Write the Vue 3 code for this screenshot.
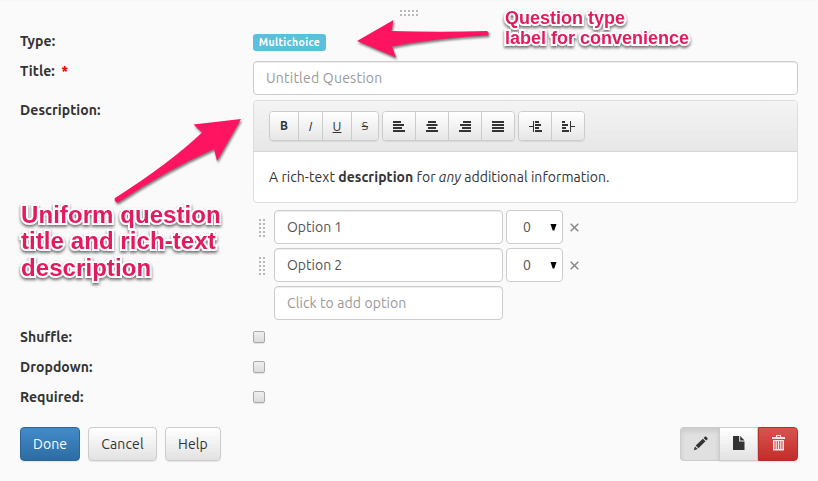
<script setup>
import { ref } from 'vue'

const title = ref('')
const options = ref([
  { id: 1, text: 'Option 1', score: 0 },
  { id: 2, text: 'Option 2', score: 0 },
])
const flags = ['Shuffle:', 'Dropdown:', 'Required:']
const aligns = [
  { name: 'left', d: 'M0 0h8v2H0zM0 3h11v2H0zM0 6h9v2H0zM0 9h12v2H0z' },
  { name: 'center', d: 'M2 0h8v2H2zM0.5 3h11v2H.5zM2 6h8v2H2zM0 9h12v2H0z' },
  { name: 'right', d: 'M4 0h8v2H4zM1 3h11v2H1zM3 6h9v2H3zM0 9h12v2H0z' },
  { name: 'justify', d: 'M0 0h12v2H0zM0 3h12v2H0zM0 6h12v2H0zM0 9h12v2H0z' },
]
const indents = [
  { name: 'indent', d: 'M0 5h4v1H0zM4 0h1v11H4zM6 0h4v2H6zM6 3h6v2H6zM6 6h4v2H6zM6 9h7v2H6z' },
  { name: 'outdent', d: 'M9 5h4v1H9zM8 0h1v11H8zM0 0h3v2H0zM0 3h6v2H0zM0 6h4v2H0zM0 9h7v2H0z' },
]
</script>

<template>
  <div class="panel">
    <div class="drag-row"><i class="dots wide"></i></div>

    <div class="row type">
      <span class="label">Type:</span>
      <span class="badge">Multichoice</span>
    </div>

    <div class="row title">
      <span class="label">Title: <b class="star">*</b></span>
      <input v-model="title" class="field main" placeholder="Untitled Question" />
    </div>

    <div class="row desc">
      <span class="label">Description:</span>
      <div class="editor">
        <div class="toolbar">
          <div class="group">
            <button class="tool w29 bold">B</button>
            <button class="tool w24 italic">I</button>
            <button class="tool w29 under">U</button>
            <button class="tool w26 strike">S</button>
          </div>
          <div class="group">
            <button v-for="a in aligns" :key="a.name" class="tool icon">
              <svg width="12" height="11" viewBox="0 0 12 11"><path :d="a.d" /></svg>
            </button>
          </div>
          <div class="group">
            <button v-for="a in indents" :key="a.name" class="tool icon">
              <svg width="13" height="11" viewBox="0 0 13 11"><path :d="a.d" /></svg>
            </button>
          </div>
        </div>
        <div class="body">A rich-text <b>description</b> for <em>any</em> additional information.</div>
      </div>
    </div>

    <div class="options">
      <div v-for="o in options" :key="o.id" class="option">
        <i class="dots tall"></i>
        <input v-model="o.text" class="field opt" />
        <div class="select"><span>{{ o.score }}</span><svg width="7" height="7" viewBox="0 0 7 7"><path d="M.5 0h6L4.300 6.500H2.700z" /></svg></div>
        <svg class="close" width="9" height="9" viewBox="0 0 9 9"><path d="M.7 .7l7.600 7.600M8.300 .7L.7 8.300" /></svg>
      </div>
      <div class="option">
        <i class="gap"></i>
        <input class="field opt add" placeholder="Click to add option" />
      </div>
    </div>

    <div class="flags">
      <div v-for="f in flags" :key="f" class="flag">
        <span class="label">{{ f }}</span><i class="check"></i>
      </div>
    </div>

    <div class="footer">
      <button class="btn primary">Done</button>
      <button class="btn cancel">Cancel</button>
      <button class="btn help">Help</button>
      <div class="actions">
        <button class="btn act active">
          <svg width="15" height="15" viewBox="0 0 16 16"><path d="M.8 15.2l1.3-4.1 2.9 2.8zM2.9 10.2l7.6-7.3 2.8 2.8-7.5 7.4zM11.3 2.1l1.3-1.2c.5-.5 1-.5 1.500 0l1.2 1.3c.5.5.5 1 0 1.500L14.1 4.9z" /></svg>
        </button>
        <button class="btn act">
          <svg width="12" height="14" viewBox="0 0 12 14"><path d="M0 0h6.2v5.500H11.500V14H0zM7.200 0L11.500 4.500H7.200z" /></svg>
        </button>
        <button class="btn act danger">
          <svg width="13" height="16" viewBox="0 0 13 16"><path fill-rule="evenodd" d="M4 0h5v2H13v2H0V2h4zM5 1v1h3V1zM1 5h11v10.500H1zM2.500 6v8h1V6zM4.800 6v8h1V6zM7.200 6v8h1V6zM9.500 6v8h1V6z" /></svg>
        </button>
      </div>
    </div>

    <svg class="arrows" width="818" height="481" viewBox="0 0 818 481">
      <path d="M357 41L393.500 20L391.500 31Q440 32.500 487 31Q490 33 488 35.200Q435 38 392 46.500L396 57.500Z" />
      <path d="M241 119L193.500 124.500L202 132.500Q170 163 115 198Q113.500 202 118 202.500Q165 171 214 149L217 161Z" />
    </svg>
    <div class="note note-type"><div>Question type</div><div>label for convenience</div></div>
    <div class="note note-desc"><div>Uniform question</div><div>title and rich-text</div><div>description</div></div>
  </div>
</template>

<style>
body { margin: 0; background: #fafafa; overflow: hidden; }
</style>

<style scoped>
.panel, .panel * { box-sizing: border-box; }
.panel {
  position: relative;
  width: 818px;
  height: 481px;
  padding: 0 20px;
  border-top: 1px solid #f7f7f7;
  background: #fafafa;
  color: #333;
  font: 14px/20px Ubuntu, "Noto Sans", sans-serif;
}
button, input { font: inherit; color: inherit; margin: 0; }
.drag-row { height: 30px; display: flex; justify-content: center; padding-top: 9px; }
.dots { display: block; background: conic-gradient(#b8b8b8 0 25%, transparent 0) -2px 0 / 4px 4px; }
.dots.wide { width: 18px; height: 6px; }
.dots.tall { width: 6px; height: 18px; margin: 2px 9px 0 6px; background-position: -2px 0; }
.dots { background-position: -2px 0; }
.gap { width: 21px; }
.row { display: grid; grid-template-columns: 233px 545px; align-items: start; }
.label { font-weight: 700; letter-spacing: .06px; }
.type { height: 30px; }
.badge {
  justify-self: start;
  width: 73px;
  height: 17px;
  margin-top: 3px;
  border-radius: 3px;
  background: #5bc0de;
  color: #fff;
  font-size: 10.500px;
  font-weight: 700;
  letter-spacing: .35px;
  line-height: 16px;
  text-align: center;
}
.star { color: #e00; margin-left: 3px; }
.title { height: 39px; }
.field {
  height: 34px;
  padding: 0 12px;
  border: 1px solid #ccc;
  border-radius: 4px;
  background: #fff;
  color: #555;
  box-shadow: inset 0 1px 1px rgba(0, 0, 0, .075);
  outline: 0;
}
.field::placeholder { color: #999; opacity: 1; }
.main { letter-spacing: .23px; }
.add { letter-spacing: .1px; }
.editor { height: 103px; border: 1px solid #ddd; border-radius: 4px; background: #fff; overflow: hidden; }
.toolbar {
  display: flex;
  gap: 3px;
  height: 51px;
  padding: 10px 15px;
  border-bottom: 1px solid #d5d5d5;
  background: linear-gradient(#f4f4f4, #e7e7e7);
}
.group { display: flex; height: 30px; border: 1px solid #ccc; border-radius: 4px; overflow: hidden; box-shadow: 0 1px 1px rgba(0, 0, 0, .08); }
.tool {
  display: flex;
  align-items: center;
  justify-content: center;
  padding: 0;
  border: 0;
  border-right: 1px solid #ccc;
  background: linear-gradient(#fff, #e6e6e6);
  font-size: 12px;
}
.tool:last-child { border-right: 0; }
.w24 { width: 24px; }
.w26 { width: 26px; }
.w29 { width: 29px; }
.icon { width: 33px; }
.icon:last-child { width: 32px; }
.tool svg { fill: #333; }
.bold { font-weight: 700; }
.italic { font-style: italic; font-size: 13px; }
.under { text-decoration: underline; font-size: 13px; }
.strike { text-decoration: line-through; font-size: 12px; }
.body { padding: 15px; letter-spacing: .055px; }
.options { display: grid; gap: 4px; padding: 7px 0 0 233px; }
.option { display: flex; align-items: center; height: 34px; }
.opt { width: 229px; }
.select {
  display: flex;
  align-items: center;
  justify-content: space-between;
  width: 57px;
  height: 34px;
  margin: 0 7px 0 3px;
  padding: 0 5px 0 16px;
  border: 1px solid #ccc;
  border-radius: 4px;
  background: #fff;
  color: #555;
}
.select svg { fill: #000; }
.close { stroke: #888; stroke-width: 1.500; fill: none; }
.flags { padding-top: 7px; }
.flag { display: grid; grid-template-columns: 233px 12px; align-items: center; height: 20px; margin-bottom: 10px; }
.check { width: 12px; height: 12px; border: 1px solid #aaa; border-radius: 2px; background: linear-gradient(#f0f0f0, #dcdcdc); box-shadow: 0 1px 1px rgba(0, 0, 0, .1); }
.footer { display: flex; gap: 8px; padding-top: 10px; }
.btn {
  display: flex;
  align-items: center;
  justify-content: center;
  height: 34px;
  padding: 0;
  border: 1px solid #ccc;
  border-radius: 4px;
  background: linear-gradient(#fff, #e2e2e2);
  box-shadow: 0 1px 1px rgba(0, 0, 0, .08);
}
.primary { width: 60px; color: #fff; border-color: #2b669a; background: linear-gradient(#428bca, #2d6ca2); }
.cancel { width: 69px; letter-spacing: .15px; }
.help { width: 56px; letter-spacing: .15px; }
.actions { display: flex; margin-left: auto; }
.act { width: 39px; border-radius: 0; }
.act svg { fill: #333; margin-bottom: 2px; }
.act:first-child { border-radius: 4px 0 0 4px; border-right: 0; }
.act.active { background: #e0e0e0; box-shadow: inset 0 3px 5px rgba(0, 0, 0, .1); }
.act.danger { width: 40px; border-color: #b92c28; border-radius: 0 4px 4px 0; background: linear-gradient(#d9534f, #c12e2a); }
.act.danger svg { fill: #f9e6e6; margin-bottom: 3px; }
.arrows { position: absolute; left: 0; top: -1px; fill: #ff1461; filter: drop-shadow(1px 2px 1px rgba(0, 0, 0, .5)); pointer-events: none; }
.note {
  position: absolute;
  color: #e31b5e;
  font-family: "Liberation Sans", Arial, sans-serif;
  font-weight: 700;
  white-space: nowrap;
  -webkit-text-stroke: 4px #fff;
  paint-order: stroke fill;
  filter: drop-shadow(0 2px 1.500px rgba(0, 0, 0, .55));
}
.note-type { left: 505px; top: 7px; font-size: 18px; line-height: 20px; }
.note-desc { left: 21px; top: 200.800px; font-size: 24px; line-height: 26.500px; letter-spacing: .07px; }
</style>
